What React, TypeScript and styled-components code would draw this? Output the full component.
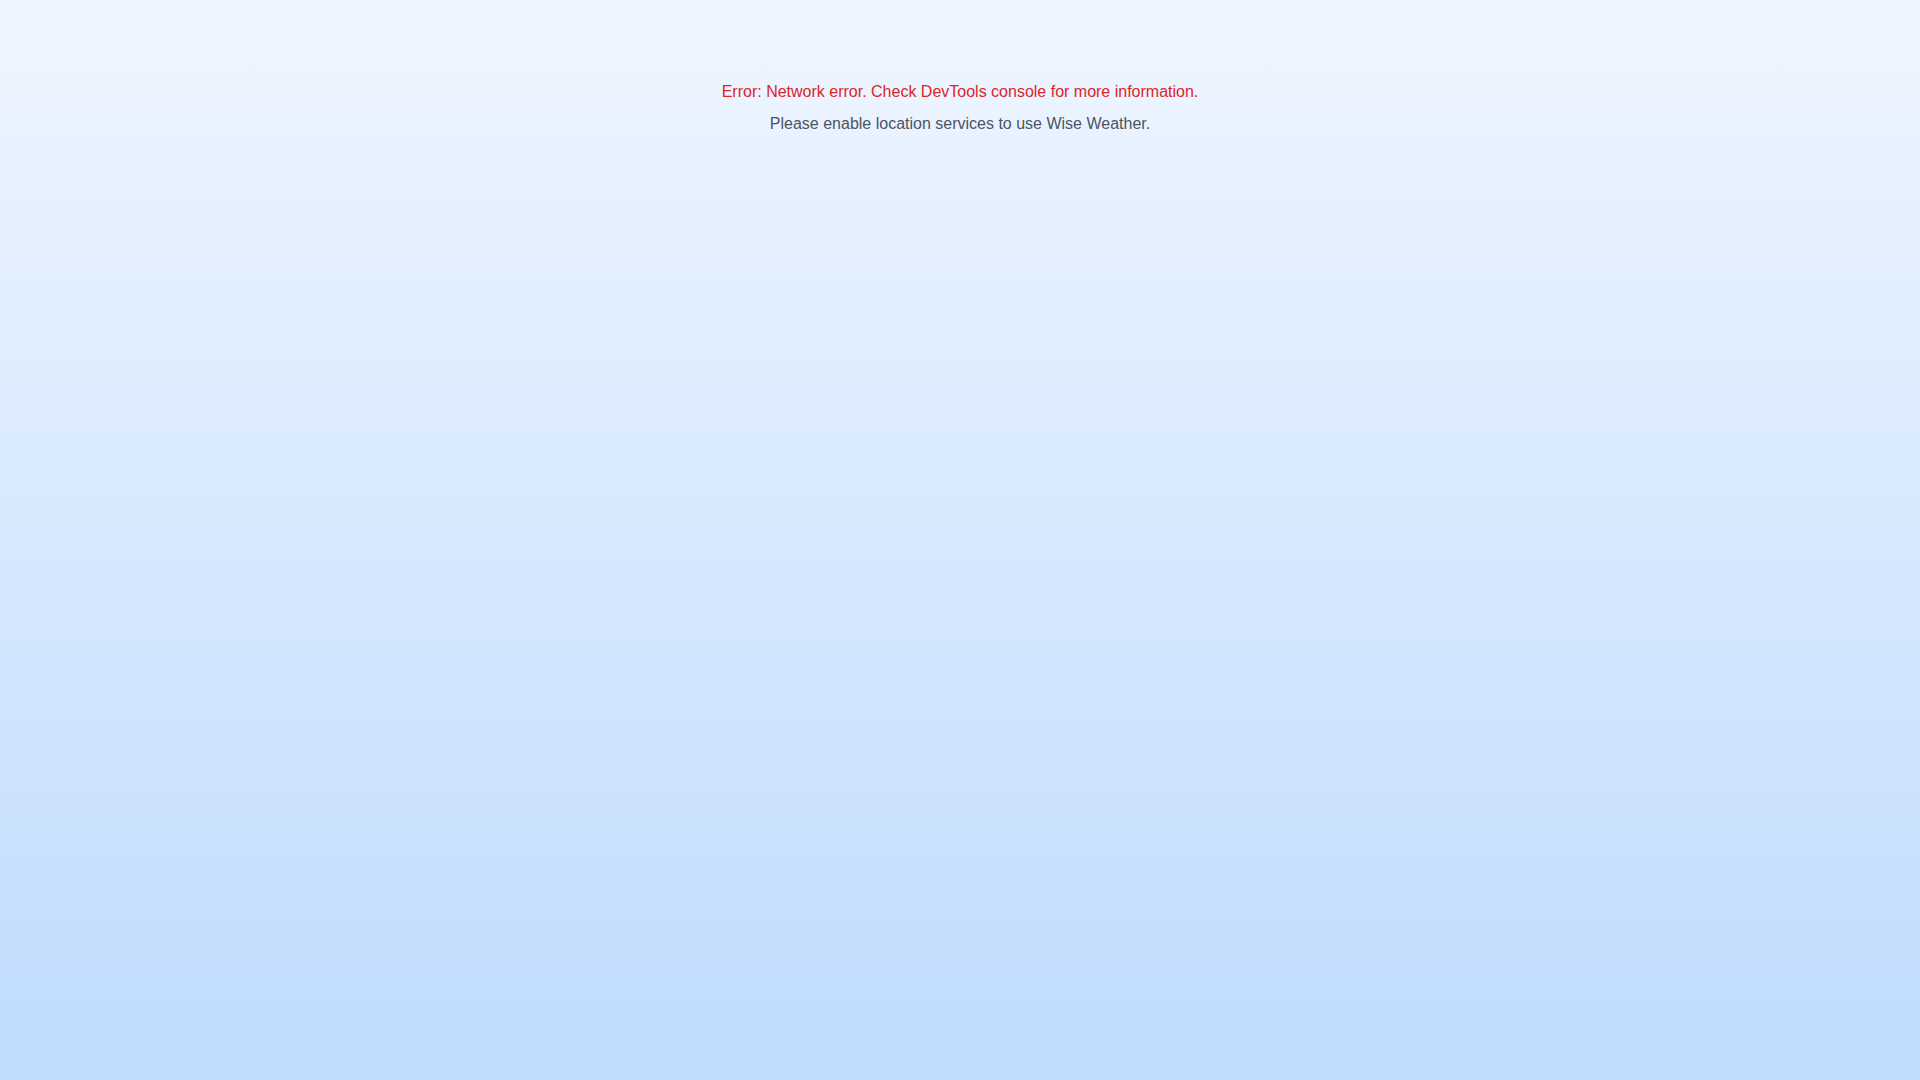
import styled, { createGlobalStyle } from 'styled-components';

const GlobalStyle = createGlobalStyle`
  * {
    box-sizing: border-box;
  }
  body {
    margin: 0;
    font-family: 'Liberation Sans', Arial, sans-serif;
  }
`;

const App = () => {
  return (
    <>
      <GlobalStyle />
      <Page>
        <Message>
          <ErrorText>Error: Network error. Check DevTools console for more information.</ErrorText>
          <HintText>Please enable location services to use Wise Weather.</HintText>
        </Message>
      </Page>
    </>
  );
};

const Page = styled.div`
  min-height: 100vh;
  background: linear-gradient(to bottom, #eff6ff, #bfdbfe);
  padding-top: 80px;
`;

const Message = styled.div`
  display: flex;
  flex-direction: column;
  align-items: center;
  gap: 8px;
`;

const ErrorText = styled.p`
  margin: 0;
  font-size: 16px;
  line-height: 24px;
  color: #dc2626;
`;

const HintText = styled.p`
  margin: 0;
  font-size: 16px;
  line-height: 24px;
  color: #4b5563;
`;

export default App;
